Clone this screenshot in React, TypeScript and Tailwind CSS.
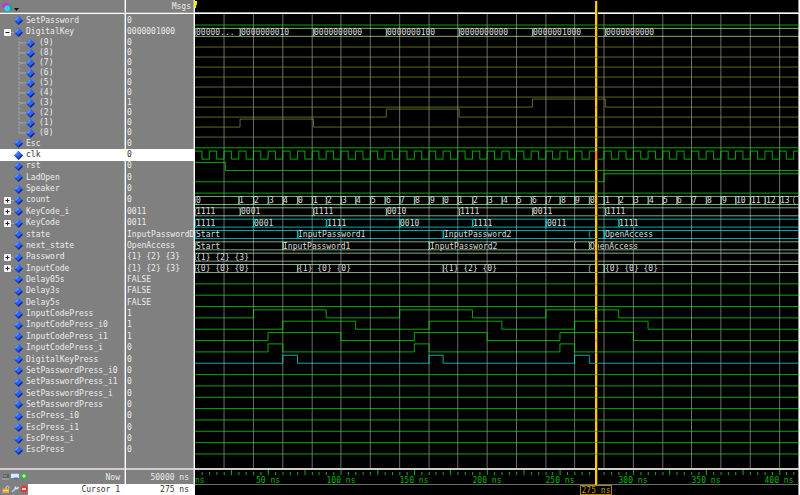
import React from "react";

type Edge = [number, number];
type Segment = [number, string];
type Signal = {
  name: string;
  value: string;
  color?: string;
  high?: Edge[];
  bus?: Segment[];
  clock?: boolean;
  expand?: "plus" | "minus";
};

const GREEN = "#00ff00";
const OLIVE = "#8a9e34";
const PALE = "#c1ffc1";
const CYAN = "#00ffff";

/* Drawing grid of the trace canvas: one unit is one trace line thick. */
const SX = 800 / 1198;
const SY = 495 / 742;
const END = 3000;
const LEFT = 195;
const TOP = 14;
const unitX = (ns: number) => Math.round(291.5 + 2.1875 * ns);
const px = (ns: number) => unitX(ns) * SX;

const KEYS = (a: string, b: string, c: string, d: string, s: number): Segment[] => [
  [0, a], [s, b], [s + 50, a], [s + 100, c], [s + 150, a], [s + 200, d], [s + 250, a],
];

const countBus: Segment[] = [[0, "0"]];
for (let t = 30; t <= 400; t += 10) {
  const n = t < 70 ? t / 10 - 2 : t < 170 ? t / 10 - 7 : t < 270 ? t / 10 - 17 : t / 10 - 27;
  countBus.push([t, String(n)]);
}
countBus.push([410, ""]);

const head: Signal[] = [
  { name: "SetPassword", value: "0" },
  {
    name: "DigitalKey",
    value: "0000001000",
    expand: "minus",
    color: PALE,
    bus: [
      [0, "00000..."], [31, "0000000010"], [81, "0000000000"], [131, "0000000100"],
      [181, "0000000000"], [231, "0000001000"], [281, "0000000000"],
    ],
  },
];

const bits: Signal[] = [9, 8, 7, 6, 5, 4, 3, 2, 1, 0].map((n) => ({
  name: `(${n})`,
  value: n === 3 ? "1" : "0",
  color: OLIVE,
  high: n === 3 ? [[231, 281]] : n === 2 ? [[131, 181]] : n === 1 ? [[31, 81]] : [],
}));

const body: Signal[] = [
  { name: "Esc", value: "0" },
  { name: "clk", value: "0", clock: true },
  { name: "rst", value: "0", high: [[0, 21]] },
  { name: "LadOpen", value: "0", high: [[280, 2000]] },
  { name: "Speaker", value: "0" },
  { name: "count", value: "0", expand: "plus", color: PALE, bus: countBus },
  { name: "KeyCode_i", value: "0011", expand: "plus", color: PALE, bus: KEYS("1111", "0001", "0010", "0011", 31) },
  { name: "KeyCode", value: "0011", expand: "plus", color: CYAN, bus: KEYS("1111", "0001", "0010", "0011", 40) },
  {
    name: "state", value: "InputPasswordD", color: CYAN,
    bus: [[0, "Start"], [70, "InputPassword1"], [170, "InputPassword2"], [270, ""], [280, "OpenAccess"]],
  },
  {
    name: "next_state", value: "OpenAccess", color: PALE,
    bus: [[0, "Start"], [60, "InputPassword1"], [160, "InputPassword2"], [260, ""], [270, "OpenAccess"]],
  },
  { name: "Password", value: "{1} {2} {3}", expand: "plus", color: PALE, bus: [[0, "{1} {2} {3}"]] },
  {
    name: "InputCode", value: "{1} {2} {3}", expand: "plus", color: PALE,
    bus: [[0, "{0} {0} {0}"], [70, "{1} {0} {0}"], [170, "{1} {2} {0}"], [270, ""], [280, "{0} {0} {0}"]],
  },
  { name: "Delay05s", value: "FALSE" },
  { name: "Delay3s", value: "FALSE" },
  { name: "Delay5s", value: "FALSE" },
  { name: "InputCodePress", value: "1", high: [[40, 90], [140, 190], [240, 290]] },
  { name: "InputCodePress_i0", value: "1", high: [[60, 110], [160, 210], [260, 310]] },
  { name: "InputCodePress_i1", value: "1", high: [[50, 100], [150, 200], [250, 300]] },
  { name: "InputCodePress_i", value: "0", high: [[50, 60], [150, 160], [250, 260]] },
  { name: "DigitalKeyPress", value: "0", color: CYAN, high: [[60, 70], [160, 170], [260, 270]] },
  { name: "SetPasswordPress_i0", value: "0" },
  { name: "SetPasswordPress_i1", value: "0" },
  { name: "SetPasswordPress_i", value: "0" },
  { name: "SetPasswordPress", value: "0" },
  { name: "EscPress_i0", value: "0" },
  { name: "EscPress_i1", value: "0" },
  { name: "EscPress_i", value: "0" },
  { name: "EscPress", value: "0" },
];

/* Each signal paired with the baseline of its trace. */
const traces: { s: Signal; low: number }[] = [
  ...head.map((s, i) => ({ s, low: 37 + 17 * i })),
  ...bits.map((s, i) => ({ s, low: 70 + 15 * i })),
  ...body.map((s, i) => ({ s, low: 221 + 17 * i })),
];

const clockEdges: Edge[] = Array.from({ length: 200 }, (_, i) => [i * 10, i * 10 + 5]);

function levelPath(low: number, high: Edge[]) {
  const lo = low + 0.5;
  const hi = low - 11.5;
  let d = `M290 ${lo}`;
  for (const [a, b] of high) {
    const x1 = unitX(a) + 0.5;
    const x2 = unitX(b) + 0.5;
    d += a === 0 ? `M290 ${hi}H${x2}V${lo}` : `H${x1}V${hi}H${x2}V${lo}`;
  }
  return high.length && high[0][0] === 0 ? d.slice(d.indexOf("M", 1)) + `H${END}` : d + `H${END}`;
}

function busPath(low: number, bus: Segment[]) {
  const lo = low + 0.5;
  const hi = low - 11.5;
  let d = `M290 ${lo}H${END}M290 ${hi}H${END}`;
  for (const [t, label] of bus) {
    const x = unitX(t) + 0.5;
    if (t > 0 && label) d += `M${x - 1} ${hi}L${x + 1} ${hi + 4}V${lo - 4}L${x - 1} ${lo}`;
    d += `M${x + 2} ${hi}L${x} ${hi + 3}V${lo - 3}L${x + 2} ${lo}`;
  }
  return d;
}

const mono = "font-['DejaVu_Sans_Mono','Liberation_Mono',monospace] text-[8px]";

function Waves() {
  return (
    <svg className={`block min-h-0 w-full flex-1 overflow-hidden ${mono}`} role="img" aria-label="Signal traces">
      <g transform={`translate(${-LEFT} ${-TOP}) scale(${SX} ${SY})`} fill="none">
        {Array.from({ length: 60 }, (_, k) => (
          <path key={k} d={`M${unitX((k + 1) * 20) + 0.5} 20V900`} stroke="#a2a2a2" />
        ))}
        {traces.map(({ s, low }) => (
          <path
            key={s.name}
            d={s.bus ? busPath(low, s.bus) : levelPath(low, s.clock ? clockEdges : s.high ?? [])}
            stroke={s.color ?? GREEN}
          />
        ))}
      </g>
      <g transform={`translate(${-LEFT} ${-TOP})`} fill="#dcdcdc">
        {traces.map(({ s, low }) =>
          (s.bus ?? [])
            .filter(([, label]) => label)
            .map(([t, label]) => (
              <text key={s.name + t} x={Math.round(px(t) + 1)} y={Math.round(low * SY - 1)}>
                {label}
              </text>
            ))
        )}
      </g>
    </svg>
  );
}

function Ruler() {
  return (
    <svg className={`block h-[14px] w-full overflow-hidden ${mono}`} role="img" aria-label="Time scale">
      <g transform={`translate(${-LEFT} 0)`} fill="#00bb00">
        {Array.from({ length: 240 }, (_, i) => (i + 1) * 5).map((t) => (
          <rect key={t} x={px(t)} y={t % 25 ? 2 : 0} width={1} height={t % 25 ? 3 : 5} />
        ))}
        <text x={195} y={13}>
          ns
        </text>
        {Array.from({ length: 8 }, (_, i) => (i + 1) * 50).map((t) => (
          <text key={t} x={Math.round(px(t))} y={13} textAnchor="middle">
            {t} ns
          </text>
        ))}
      </g>
    </svg>
  );
}

function Diamond() {
  return (
    <svg viewBox="0 0 9 9" className="h-[9px] w-[9px] shrink-0" aria-hidden="true">
      <path d="M4.5 0L9 4.5 4.5 9 0 4.5Z" fill="#1f3fc4" />
      <path d="M4.5 0L9 4.5H4.5L0 4.5Z" fill="#2f62ee" />
      <path d="M4.5 0L0 4.5 4.5 4.5Z" fill="#5a9cff" />
      <path d="M4.5 2L7 4.5 4.5 7 2 4.5Z" fill="#2c68f4" />
      <path d="M4.5 9L9 4.5 7 4.5 4.5 7Z" fill="#14218c" />
    </svg>
  );
}

function Toggle({ kind, name }: { kind: "plus" | "minus"; name: string }) {
  return (
    <button type="button" aria-label={`${kind === "plus" ? "Expand" : "Collapse"} ${name}`} className="flex items-center">
      <svg viewBox="0 0 10 7" className="h-[7px] w-[10px]" aria-hidden="true">
        <rect width="7" height="7" rx="1" fill="#f4f6fa" />
        <path d={kind === "plus" ? "M1.5 3.5H5.5M3.5 1.5V5.5" : "M1.5 3.5H5.5"} stroke="#222" fill="none" />
        <path d="M7 3.5H10" stroke="#a8a8a8" />
      </svg>
    </button>
  );
}

function NameRow({ s }: { s: Signal }) {
  return (
    <li className={`flex min-h-0 flex-1 items-center leading-none ${s.clock ? "bg-white text-[#333]" : ""}`}>
      <span className="flex w-[14px] shrink-0 justify-end">{s.expand && <Toggle kind={s.expand} name={s.name} />}</span>
      <Diamond />
      <span className="pl-[3px]">{s.name}</span>
    </li>
  );
}

function BitRow({ s, last }: { s: Signal; last: boolean }) {
  return (
    <li className="flex h-[10px] items-center pl-[18px] leading-none">
      <svg viewBox="0 0 8 10" className="h-[10px] w-2 shrink-0" aria-hidden="true">
        <path d={last ? "M1 0V5" : "M1 0V10"} stroke="#a6a6a6" strokeDasharray="2 1" />
        <path d="M1 5H8" stroke="#a6a6a6" />
      </svg>
      <Diamond />
      <span className="pl-1">{s.name}</span>
    </li>
  );
}

function ValueRow({ s, fixed }: { s: Signal; fixed?: boolean }) {
  return (
    <li
      className={`flex items-center overflow-hidden pl-px leading-none whitespace-nowrap ${
        fixed ? "h-[10px]" : "min-h-0 flex-1"
      } ${s.clock ? "bg-white text-[#333]" : ""}`}
    >
      {s.value}
    </li>
  );
}

const pane = "flex shrink-0 flex-col border-r border-white shadow-[inset_-1px_0_0_#b4b4b4]";
const header = "flex h-[14px] shrink-0 items-center border-b border-white shadow-[inset_0_-1px_0_#a0a0a0]";
const footer = "h-[27px] shrink-0 border-t-2 border-[#cfcbcf]";

function FooterIcons() {
  return (
    <div className="grid w-7 shrink-0 grid-cols-3 grid-rows-2 items-center justify-items-center pl-px">
      <button type="button" aria-label="Save cursors">
        <svg viewBox="0 0 8 8" className="h-2 w-2">
          <path d="M1 6L2 2H7V6Z" fill="#56606c" />
          <path d="M2 4H5" stroke="#a4b0bc" />
          <path d="M0 7H7" stroke="#b0b4b8" />
        </svg>
      </button>
      <button type="button" aria-label="Edit timeline">
        <svg viewBox="0 0 8 8" className="h-2 w-2">
          <rect y="1" width="8" height="5" fill="#dce9fa" />
          <path d="M0 1.5H8" stroke="#6f9fe0" />
          <path d="M3 6.5H7" stroke="#3e77c8" strokeWidth="2" />
        </svg>
      </button>
      <button type="button" aria-label="Add cursor">
        <svg viewBox="0 0 8 8" className="h-2 w-2">
          <circle cx="4" cy="4" r="3.5" fill="#3fae3f" />
          <path d="M4 2V6M2 4H6" stroke="#d8f4d8" />
        </svg>
      </button>
      <button type="button" aria-label="Lock cursor">
        <svg viewBox="0 0 8 8" className="h-2 w-2">
          <path d="M4 4V2.2Q5.5 0 7 2.2V3.5" stroke="#dcdcdc" fill="none" />
          <rect x="0.5" y="3.5" width="6.5" height="4.5" fill="#f0a63a" />
          <path d="M1 5.5H6.5" stroke="#ffd88a" />
        </svg>
      </button>
      <button type="button" aria-label="Cursor properties">
        <svg viewBox="0 0 8 8" className="h-2 w-2">
          <path d="M1 7L5 3" stroke="#9cc2f4" strokeWidth="1.8" />
          <path d="M4.5 1.5V3.5H6.5L7.5 2" stroke="#d4e4fa" strokeWidth="1.4" fill="none" />
        </svg>
      </button>
      <button type="button" aria-label="Delete cursor">
        <svg viewBox="0 0 8 8" className="h-2 w-2">
          <circle cx="4" cy="4" r="3.5" fill="#e03a30" />
          <path d="M2 4H6" stroke="#fff" strokeWidth="1.4" />
        </svg>
      </button>
    </div>
  );
}

export default function App() {
  return (
    <main className={`flex h-screen overflow-hidden bg-[#808080] text-[#ececec] ${mono}`}>
      <section className={`${pane} w-[126px]`} aria-label="Signals">
        <div className={header}>
          <button type="button" aria-label="Window options" className="pl-px">
            <svg viewBox="0 0 18 12" className="h-3 w-[18px]">
              <rect x="6" y="4" width="5" height="5" fill="#00b070" />
              <path d="M5 1L9 4.5 5 8 0 5Z" fill="#d828d0" />
              <path d="M4 5.5L5 4.5H7.5L9 6V8L7.5 10H5L3 8Z" fill="#20d8ff" />
              <path d="M13 7H18L15.5 10Z" fill="#000" />
            </svg>
          </button>
        </div>
        <div className="min-h-0 flex-1 overflow-hidden pt-px">
          <ul className="flex h-[23px] flex-col">
            {head.map((s) => <NameRow key={s.name} s={s} />)}
          </ul>
          <ul>
            {bits.map((s, i) => <BitRow key={s.name} s={s} last={i === bits.length - 1} />)}
          </ul>
          <ul className="flex h-[318px] flex-col">
            {body.map((s) => <NameRow key={s.name} s={s} />)}
          </ul>
        </div>
        <div className={`${footer} flex`}>
          <FooterIcons />
          <div className="flex flex-1 flex-col text-right">
            <div className="h-[14px] pr-[5px] leading-[16px]">Now</div>
            <div className="h-[11px] bg-white pr-[5px] leading-[12px] text-[#333]">Cursor 1</div>
          </div>
        </div>
      </section>

      <section className={`${pane} w-[69px]`} aria-label="Values">
        <div className={`${header} justify-end pr-[3px]`}>Msgs</div>
        <div className="min-h-0 flex-1 overflow-hidden pt-px">
          <ul className="flex h-[23px] flex-col">
            {head.map((s) => <ValueRow key={s.name} s={s} />)}
          </ul>
          <ul>
            {bits.map((s) => <ValueRow key={s.name} s={s} fixed />)}
          </ul>
          <ul className="flex h-[318px] flex-col">
            {body.map((s) => <ValueRow key={s.name} s={s} />)}
          </ul>
        </div>
        <div className={`${footer} text-right`}>
          <div className="h-[14px] pr-[5px] leading-[16px]">50000 ns</div>
          <div className="h-[11px] bg-white pr-[5px] leading-[12px] text-[#333]">275 ns</div>
        </div>
      </section>

      <section
        className="relative flex min-w-0 flex-1 flex-col border-r border-white bg-black shadow-[inset_-1px_0_0_#999]"
        aria-label="Waveform"
      >
        <div className={header} />
        <Waves />
        <div className={footer}>
          <Ruler />
          <div className="h-[11px] border-t border-[#6e6e6e]" />
        </div>
        <svg viewBox="0 0 3 8" className="absolute top-px -left-px h-2 w-[3px]" aria-hidden="true">
          <path d="M0 0H3V3L2 5V7H0Z" fill="#ffee00" />
        </svg>
        <div className="absolute top-px bottom-[10px] left-[400px] w-[3px] border-r border-[#4a3a00] bg-[#ffcc00]" />
        <svg className="absolute top-0 left-[400px] h-[468px] w-[2px]" aria-hidden="true">
          {traces.map(({ s, low }) => (
            <rect key={s.name} y={s.clock ? 151 : Math.round(low * SY)} width={2} height={s.clock ? 9 : 1} fill="#ff7a00" />
          ))}
        </svg>
        <div className="absolute bottom-0 left-[385px] h-[10px] w-8 border border-[#a8860a] bg-black text-center leading-[9px] text-[#c09a10]">
          275 ns
        </div>
      </section>
    </main>
  );
}
